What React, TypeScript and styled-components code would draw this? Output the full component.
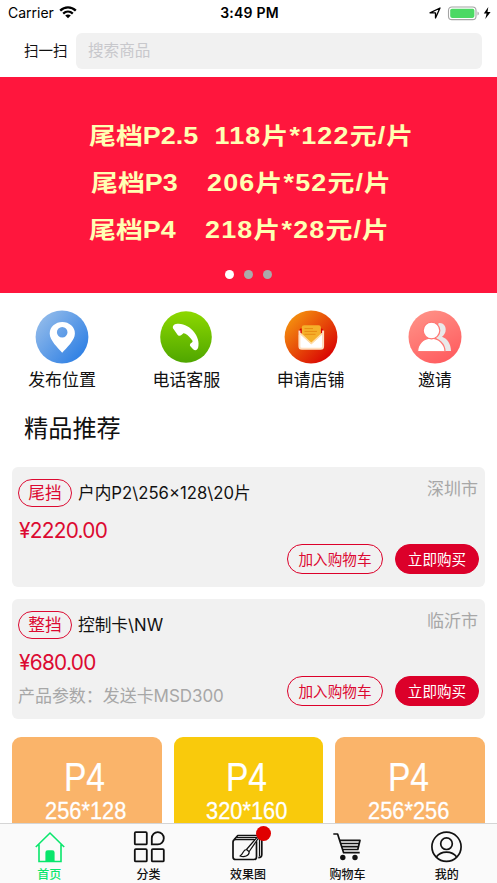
import React from "react";
import styled, { createGlobalStyle } from "styled-components";

const Global = createGlobalStyle`
  * { box-sizing: border-box; }
  body { margin: 0; background: #fff; overflow: hidden; }
`;

const Screen = styled.div`
  width: 497px;
  height: 883px;
  display: flex;
  flex-direction: column;
  overflow: hidden;
  background: #fff;
  color: #111;
  font-family: Inter, "Noto Sans CJK SC", sans-serif;
  white-space: pre;
`;

const StatusBar = styled.header`
  flex: none;
  height: 26px;
  display: grid;
  grid-template-columns: 1fr auto 1fr;
  align-items: center;
  padding: 0 6px 0 8px;
  font-size: 14px;
  line-height: 26px;
  color: #000;
`;
const Carrier = styled.div`
  display: flex;
  align-items: center;
  gap: 5px;
  letter-spacing: 0;
  svg { margin-top: -2px; }
`;
const Clock = styled.div`
  font-weight: 600;
  letter-spacing: 0.2px;
`;
const Indicators = styled.div`
  display: flex;
  align-items: center;
  justify-content: flex-end;
  height: 24px;
`;

const SearchBar = styled.div`
  flex: none;
  height: 51px;
  display: flex;
  align-items: flex-start;
  padding: 7px 15px 0 24px;
`;
const ScanLabel = styled.div`
  width: 52px;
  font-size: 14.5px;
  line-height: 36px;
`;
const SearchField = styled.div`
  flex: 1;
  height: 36px;
  border-radius: 6px;
  background: #f1f1f1;
  color: #c8c8cc;
  font-size: 15.6px;
  line-height: 36px;
  padding-left: 12px;
`;

const Banner = styled.section`
  flex: none;
  height: 216px;
  background: #ff163d;
  color: #ffffb3;
  display: flex;
  flex-direction: column;
  padding-top: 36px;
  font-family: "Liberation Sans", "Noto Sans CJK SC", sans-serif;
  font-weight: 700;
  font-size: 23px;
  line-height: 47px;
`;
const BannerLine = styled.div<{ $left: number; $gap: number }>`
  height: 47px;
  padding-left: ${(p) => p.$left}px;
  display: flex;
  gap: ${(p) => p.$gap}px;
  transform: scaleX(1.17);
  transform-origin: ${(p) => p.$left}px 50%;
`;
const BannerPrice = styled.span`
  letter-spacing: 1px;
`;
const Dots = styled.div`
  display: flex;
  justify-content: center;
  gap: 10px;
  margin-top: 16px;
`;
const Dot = styled.i<{ $on?: boolean }>`
  width: 9px;
  height: 9px;
  border-radius: 50%;
  background: ${(p) => (p.$on ? "#fff" : "#aaa")};
`;

const Shortcuts = styled.nav`
  flex: none;
  height: 107px;
  display: grid;
  grid-template-columns: repeat(4, 1fr);
  padding-top: 17px;
`;
const Shortcut = styled.div`
  display: flex;
  flex-direction: column;
  align-items: center;
  font-size: 17px;
  line-height: 32px;
  svg { display: block; }
`;
const Heading = styled.h2`
  flex: none;
  height: 67px;
  margin: 0;
  padding-left: 24px;
  font-size: 24.2px;
  font-weight: 400;
  line-height: 58px;
`;

const Card = styled.article`
  flex: none;
  width: 473px;
  height: 120px;
  margin: 0 0 12px 12px;
  padding: 12px 6px;
  border-radius: 6px;
  background: #f1f1f1;
`;
const CardTop = styled.div`
  display: flex;
  align-items: flex-start;
  height: 28px;
  font-size: 16.7px;
`;
const Title = styled.span`
  line-height: 28px;
`;
const Tag = styled.span`
  width: 54px;
  height: 28px;
  border: 1px solid #dc0a31;
  border-radius: 14px;
  color: #dc0a31;
  text-align: center;
  line-height: 26px;
  margin-right: 6px;
`;
const City = styled.span`
  margin-left: auto;
  margin-right: 1px;
  font-size: 17px;
  line-height: 21px;
  color: #a7a7a7;
`;
const Price = styled.div`
  margin-top: 11px;
  padding-left: 1px;
  color: #dc0a31;
  font-size: 20.8px;
  line-height: 26px;
  letter-spacing: -0.7px;
`;
const CardBottom = styled.div`
  display: flex;
  height: 31px;
  justify-content: flex-end;
  gap: 12px;
`;
const Param = styled.span`
  margin-right: auto;
  font-size: 17px;
  line-height: 41px;
  letter-spacing: -0.05px;
  color: #a7a7a7;
`;
const Pill = styled.button<{ $solid?: boolean }>`
  width: ${(p) => (p.$solid ? 84 : 96)}px;
  height: 30px;
  padding: 0;
  border: 1px solid #dc002a;
  border-radius: 15px;
  background: ${(p) => (p.$solid ? "#dc002a" : "transparent")};
  color: ${(p) => (p.$solid ? "#fff" : "#dc0a31")};
  font: 14.6px/26px "Noto Sans CJK SC", sans-serif;
`;

const Tiles = styled.section`
  flex: 1;
  min-height: 0;
  overflow: hidden;
  display: grid;
  grid-template-columns: repeat(3, 1fr);
  gap: 12px;
  padding: 6px 12px 0;
`;
const Tile = styled.div<{ $color: string }>`
  height: 150px;
  padding-top: 15px;
  border-radius: 9px;
  background: ${(p) => p.$color};
  color: #fff;
  display: flex;
  flex-direction: column;
  align-items: center;
  font-family: "Liberation Sans", sans-serif;
`;
const TileName = styled.div`
  font-size: 40px;
  line-height: 50px;
  -webkit-text-stroke: 0.2px #fff;
  transform: scaleX(0.84);
  margin-right: 4px;
`;
const TileSize = styled.div`
  font-size: 24.5px;
  line-height: 20px;
  margin-top: -1px;
  -webkit-text-stroke: 0.3px #fff;
  transform: scaleX(0.89);
  margin-right: 3px;
`;

const TabBar = styled.nav`
  flex: none;
  height: 60px;
  display: grid;
  grid-template-columns: repeat(5, 1fr);
  border-top: 1px solid #d5d5d5;
  background: #fafafa;
`;
const Tab = styled.div<{ $on?: boolean }>`
  position: relative;
  display: flex;
  flex-direction: column;
  align-items: center;
  padding-top: 5px;
  color: ${(p) => (p.$on ? "#09e66c" : "#111")};
  font-size: 12px;
  font-weight: 500;
  line-height: 18px;
  svg { display: block; flex: none; }
`;
const TabLabel = styled.span`
  margin-top: 1px;
  margin-right: 1px;
`;
const Badge = styled.i`
  position: absolute;
  top: 2px;
  right: 27px;
  width: 15px;
  height: 15px;
  border-radius: 50%;
  background: #e00000;
`;

const WifiIcon = () => (
  <svg width="18" height="13" viewBox="0 0 18 13" fill="none" stroke="#000" strokeWidth="2.3">
    <path d="M1.2 4.6C5.6.2 12.4.2 16.8 4.6" />
    <path d="M4.2 7.6c2.8-2.6 6.8-2.6 9.6 0" />
    <path d="M6.2 9.5c1.6-1.5 4-1.5 5.6 0L9 12.3z" fill="#000" stroke="none" />
  </svg>
);
const LocationIcon = () => (
  <svg width="12" height="12" viewBox="0 0 12 12" fill="none" stroke="#000" strokeWidth="1.3" strokeLinejoin="round">
    <path d="M1 5.800 11 1 6.500 11V5.800z" />
  </svg>
);
const BatteryIcon = () => (
  <svg width="42" height="15" viewBox="0 0 42 15">
    <rect x="7.5" y="1" width="27.5" height="12.6" rx="3.4" fill="#fff" stroke="#a4a4a4" strokeWidth="1.1" />
    <rect x="9.2" y="2.7" width="24.2" height="9.2" rx="1.8" fill="#4cd964" />
    <path d="M36.5 5.5c1.8.7 1.8 3.3 0 4z" fill="#a4a4a4" />
  </svg>
);
const BoltIcon = () => (
  <svg width="8" height="12" viewBox="0 0 8 12">
    <path d="M5.3 0 0.8 6.6h2.8L2.3 12 7.6 4.9H4.5z" fill="#000" />
  </svg>
);

const PlaceIcon = () => (
  <svg width="54" height="54" viewBox="0 0 54 54">
    <defs>
      <linearGradient id="place" x1="0.1" y1="0.15" x2="0.9" y2="0.85">
        <stop stopColor="#8fb9ea" />
        <stop offset="1" stopColor="#2f80e4" />
      </linearGradient>
    </defs>
    <circle cx="27" cy="27" r="26.4" fill="url(#place)" />
    <path fillRule="evenodd" fill="#fff" d="M27.2 42.8C23 37.5 14.7 30.5 14.7 23.4a12.6 11.5 0 0 1 25.2 0C39.9 30.5 31.5 37.5 27.2 42.8zM27.2 17a5.3 5.3 0 1 0 0 10.6 5.3 5.3 0 0 0 0-10.6z" />
  </svg>
);
const PhoneIcon = () => (
  <svg width="54" height="54" viewBox="0 0 54 54">
    <defs>
      <linearGradient id="phone" x1="0" y1="0" x2="0" y2="1">
        <stop stopColor="#8dd800" />
        <stop offset="1" stopColor="#4fa600" />
      </linearGradient>
    </defs>
    <circle cx="27" cy="27" r="25.8" fill="url(#phone)" />
    <path fill="#fff" d="M14.700 19.300c-1.800-2-.6-4.700 2.300-5.300 7-1.300 13.800 2.700 18 8 3.500 4.500 5.600 10.300 4.100 15.700-.9 3-3.400 3-5.200 1.200l-2.300-2.300c-1.500-1.800-.4-3.200 1.300-4.200.9-.6.900-1.200.2-2.100-1.600-2.500-4-4.900-6.700-6.500-1-.6-1.800-.8-2.500-.1l-1.500 1.400c-1.200 1.100-2.500 1-3.700-.2z" />
  </svg>
);
const ShopIcon = () => (
  <svg width="54" height="54" viewBox="0 0 54 54">
    <defs>
      <linearGradient id="shop" x1="0.15" y1="0.15" x2="0.85" y2="0.85">
        <stop stopColor="#f38a0e" />
        <stop offset="1" stopColor="#da0803" />
      </linearGradient>
    </defs>
    <circle cx="27" cy="27" r="26.4" fill="url(#shop)" />
    <path d="m14.500 21 2-2.500h21.500l2 2.500v4H14.500z" fill="#d90000" />
    <path d="M16 22.500l11.300 11 11.300-11V38H16z" fill="#fff" />
    <path d="M17.800 17.500a2.300 2.300 0 0 1 2.300-2.300h14.500a2.300 2.300 0 0 1 2.300 2.300v7.700L27.300 34 17.800 25.200z" fill="#f5b02a" />
    <path d="M20.500 18.600h8.500M20.500 21.400h12.500M20.500 24.300h11" stroke="#e98b12" strokeWidth="1" />
    <path d="M15.400 20.500v15.700a2.500 2.500 0 0 0 2.500 2.500h18.700a2.500 2.500 0 0 0 2.500-2.500V20.500" fill="none" stroke="#ffdfc0" strokeWidth="2" />
    <path d="m16.500 23.600 10.800 9.900 10.800-9.900" fill="none" stroke="#ffdca8" strokeWidth="1.500" />
  </svg>
);
const InviteIcon = () => (
  <svg width="54" height="54" viewBox="0 0 54 54">
    <defs>
      <linearGradient id="invite" x1="0.2" y1="0" x2="0.7" y2="1">
        <stop stopColor="#ff9287" />
        <stop offset="1" stopColor="#ff5c5f" />
      </linearGradient>
    </defs>
    <circle cx="27" cy="27" r="26.500" fill="url(#invite)" />
    <path d="M30.500 13.200c4.500-.8 7.200 2.500 7.200 6.300 0 3.500-1.700 5.600-3.700 7.200 5.600 2 8.800 7.100 9 14.300h-8.700c-.2-5.700-2.500-10.200-6.500-13z" fill="#e9e9e9" />
    <path d="M9.600 41.500C9.800 34 15 28.200 23 28.200S36.800 34 37 41.500z" fill="#fff" stroke="#ff7773" strokeWidth="1.200" />
    <circle cx="23.500" cy="20.500" r="8.300" fill="#fff" stroke="#ff7773" strokeWidth="1.200" />
  </svg>
);

const HomeIcon = () => (
  <svg width="36" height="36" viewBox="0 0 36 36" fill="none" stroke="#09e66c" strokeWidth="1.600">
    <path d="M3.800 18 18 4l14.200 14M7 15.500v17h22v-17" />
    <path d="M14.200 32V23.500a1.500 1.500 0 0 1 1.500-1.500h4.600a1.500 1.500 0 0 1 1.500 1.500V32z" fill="#09e66c" />
  </svg>
);
const GridIcon = () => (
  <svg width="36" height="36" viewBox="0 0 36 36" fill="none" stroke="#111" strokeWidth="1.800">
    <rect x="3.800" y="3.200" width="12" height="12.200" rx="1" />
    <rect x="3.800" y="20.200" width="12" height="12.200" rx="1" />
    <rect x="20.800" y="20.200" width="12" height="12.200" rx="1" />
    <path d="M20.800 15.400V9.300a6 6.100 0 1 1 6 6.100z" />
  </svg>
);
const EffectIcon = () => (
  <svg width="36" height="36" viewBox="0 0 36 36" fill="none" stroke="#111" strokeWidth="1.700" strokeLinejoin="round">
    <rect x="3" y="10.500" width="23.500" height="20" rx="2.600" />
    <path d="M4.200 10.500 7.800 6.500h21a3 3 0 0 1 3 3v16c0 2-1.500 3.200-3.500 3.200" />
    <path d="M6.500 8.500h20a3 3 0 0 1 3 3v16" strokeWidth="1.200" />
    <path d="M16.500 20.500 28.200 7l1 1-10 14.500M16.500 20.500c-3.700 0-3 4.500-6.500 6.500 4.200 1.400 9.200.2 9.200-4.300z" fill="#fafafa" strokeWidth="1.200" />
  </svg>
);
const CartIcon = () => (
  <svg width="36" height="36" viewBox="0 0 36 36" fill="none" stroke="#111" strokeWidth="1.700" strokeLinejoin="round">
    <path d="M3.300 5h4.300l6 18.700h16.100" />
    <path d="M9.300 11.300h20.700l-2.200 9.200H12.600M10.400 14.500h18.700M11.500 17.600h17" />
    <circle cx="12.800" cy="28.500" r="2.700" fill="#111" stroke="none" />
    <circle cx="25" cy="28.500" r="2.700" fill="#111" stroke="none" />
  </svg>
);
const ProfileIcon = () => (
  <svg width="36" height="36" viewBox="0 0 36 36" fill="none" stroke="#111" strokeWidth="1.700">
    <circle cx="17.500" cy="17.800" r="14.600" />
    <circle cx="17.500" cy="14.700" r="5.800" />
    <path d="M7.300 28C12 21.500 23 21.500 27.700 28" />
  </svg>
);

const bannerLines = [
  { model: "尾档P2.5", price: "118片*122元/片", left: 89, gap: 14 },
  { model: "尾档P3", price: "206片*52元/片", left: 91, gap: 25 },
  { model: "尾档P4", price: "218片*28元/片", left: 89, gap: 25 },
];
const shortcuts = [
  { label: "发布位置", Icon: PlaceIcon },
  { label: "电话客服", Icon: PhoneIcon },
  { label: "申请店铺", Icon: ShopIcon },
  { label: "邀请", Icon: InviteIcon },
];
const products = [
  { tag: "尾挡", title: "户内P2\\256×128\\20片", city: "深圳市", price: "¥2220.00", param: "" },
  { tag: "整挡", title: "控制卡\\NW", city: "临沂市", price: "¥680.00", param: "产品参数：发送卡MSD300" },
];
const tiles = [
  { size: "256*128", color: "#fab46a" },
  { size: "320*160", color: "#f9ca0c" },
  { size: "256*256", color: "#fab46a" },
];
const tabs = [
  { label: "首页", Icon: HomeIcon, on: true },
  { label: "分类", Icon: GridIcon },
  { label: "效果图", Icon: EffectIcon, badge: true },
  { label: "购物车", Icon: CartIcon },
  { label: "我的", Icon: ProfileIcon },
];

export default function App() {
  return (
    <Screen>
      <Global />
      <StatusBar>
        <Carrier>Carrier<WifiIcon /></Carrier>
        <Clock>3:49 PM</Clock>
        <Indicators><LocationIcon /><BatteryIcon /><BoltIcon /></Indicators>
      </StatusBar>
      <SearchBar>
        <ScanLabel>扫一扫</ScanLabel>
        <SearchField>搜索商品</SearchField>
      </SearchBar>
      <Banner>
        {bannerLines.map((l) => (
          <BannerLine key={l.model} $left={l.left} $gap={l.gap}>
            <span>{l.model}</span>
            <BannerPrice>{l.price}</BannerPrice>
          </BannerLine>
        ))}
        <Dots><Dot $on /><Dot /><Dot /></Dots>
      </Banner>
      <Shortcuts>
        {shortcuts.map(({ label, Icon }) => (
          <Shortcut key={label}><Icon />{label}</Shortcut>
        ))}
      </Shortcuts>
      <Heading>精品推荐</Heading>
      {products.map((p) => (
        <Card key={p.tag}>
          <CardTop>
            <Tag>{p.tag}</Tag>
            <Title>{p.title}</Title>
            <City>{p.city}</City>
          </CardTop>
          <Price>{p.price}</Price>
          <CardBottom>
            <Param>{p.param}</Param>
            <Pill>加入购物车</Pill>
            <Pill $solid>立即购买</Pill>
          </CardBottom>
        </Card>
      ))}
      <Tiles>
        {tiles.map((t) => (
          <Tile key={t.size} $color={t.color}>
            <TileName>P4</TileName>
            <TileSize>{t.size}</TileSize>
          </Tile>
        ))}
      </Tiles>
      <TabBar>
        {tabs.map(({ label, Icon, on, badge }) => (
          <Tab key={label} $on={on}>
            <Icon />
            <TabLabel>{label}</TabLabel>
            {badge && <Badge />}
          </Tab>
        ))}
      </TabBar>
    </Screen>
  );
}
